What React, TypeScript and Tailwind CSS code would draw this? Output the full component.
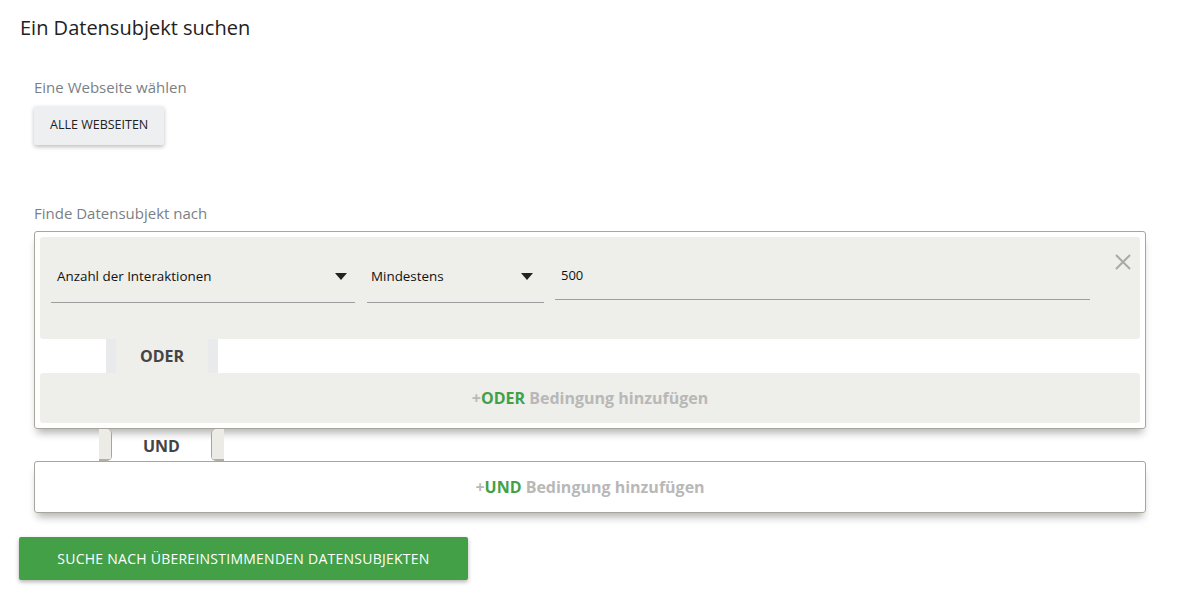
import React from "react";

const Caret = () => (
  <svg width="12" height="7" viewBox="0 0 12 7" className="shrink-0">
    <path d="M0 0h12L6 7z" fill="#222" />
  </svg>
);

const App = () => {
  return (
    <div className="min-h-screen bg-white font-['Open_Sans',sans-serif] text-[#222] pt-[13px] pl-[20px] pr-[42px]">
      <h1 className="text-[20px] leading-[30px] text-[#222]">Ein Datensubjekt suchen</h1>

      <div className="pl-[14px] mt-[34px]">
        <p className="text-[15px] leading-[20px] text-[#7b7f86]">Eine Webseite wählen</p>
        <button className="mt-[9px] h-[39px] px-[16px] bg-[#eeeff1] text-[12.5px] uppercase text-[#222] rounded-[2px] shadow-[0_2px_4px_rgba(0,0,0,0.25)]">
          Alle Webseiten
        </button>

        <p className="mt-[58px] text-[15px] leading-[20px] text-[#7b7f86]">Finde Datensubjekt nach</p>

        {/* ODER group */}
        <div className="mt-[8px] border border-[#a8a59c] rounded-[3px] p-[5px] shadow-[0_7px_8px_-3px_rgba(0,0,0,0.3)]">
          <div className="bg-[#eeeeea] rounded-[3px] h-[102px] flex items-start pl-[11px] pr-[8px] pt-[21px]">
            <div className="w-[304px] h-[45px] border-b border-[#9e9e9e] flex items-center justify-between pl-[6px] pr-[8px] pb-[8px]">
              <span className="text-[13.4px] text-[#111]">Anzahl der Interaktionen</span>
              <Caret />
            </div>
            <div className="ml-[12px] w-[177px] h-[45px] border-b border-[#9e9e9e] flex items-center justify-between pl-[4px] pr-[11px] pb-[8px]">
              <span className="text-[13.4px] text-[#111]">Mindestens</span>
              <Caret />
            </div>
            <div className="ml-[11px] w-[535px] h-[42px] border-b border-[#9e9e9e] flex items-center pl-[6px] pb-[5px]">
              <span className="text-[13px] text-[#111]">500</span>
            </div>
            <div className="ml-auto -mt-[5px]">
              <svg width="18" height="18" viewBox="0 0 18 18">
                <path d="M2 2L16 16M16 2L2 16" stroke="#a9a9a9" strokeWidth="2" />
              </svg>
            </div>
          </div>
          <div className="flex h-[34px]">
            <div className="w-[66px]" />
            <div className="w-[112px] bg-[#eeeeea] border-x-[10px] border-[#e9eaeb] flex items-center justify-center text-[16px] font-bold text-[#444]">
              ODER
            </div>
          </div>
          <div className="bg-[#eeeeea] rounded-[3px] h-[50px] flex items-center justify-center text-[16px] font-bold text-[#b8b8b8]">
            <span>
              +<span className="text-[#43a047]">ODER</span> Bedingung hinzufügen
            </span>
          </div>
        </div>

        {/* UND tab row */}
        <div className="flex h-[32px]">
          <div className="w-[78px] flex justify-end border-r border-[#a8a59c] rounded-r-[5px] overflow-hidden">
            <div className="w-[12px] bg-[#ecebe6] border-b-2 border-[#b2afa6]" />
          </div>
          <div className="w-[99px] flex items-center justify-center text-[16px] font-bold text-[#444] pt-[2px]">UND</div>
          <div className="flex-1 flex border-l border-[#a8a59c] rounded-l-[5px] overflow-hidden">
            <div className="w-[12px] bg-[#ecebe6] border-b-2 border-[#b2afa6]" />
          </div>
        </div>

        <div className="border border-[#a8a59c] rounded-[3px] h-[52px] flex items-center justify-center text-[16px] font-bold text-[#b8b8b8] shadow-[0_7px_8px_-3px_rgba(0,0,0,0.3)]">
          <span>
            +<span className="text-[#43a047]">UND</span> Bedingung hinzufügen
          </span>
        </div>
      </div>

      <button className="mt-[24px] -ml-[1px] h-[43px] w-[449px] bg-[#43a047] text-white text-[14px] tracking-[0.25px] uppercase rounded-[2px] shadow-[0_2px_4px_rgba(0,0,0,0.3)]">
        Suche nach übereinstimmenden Datensubjekten
      </button>
    </div>
  );
};

export default App;
